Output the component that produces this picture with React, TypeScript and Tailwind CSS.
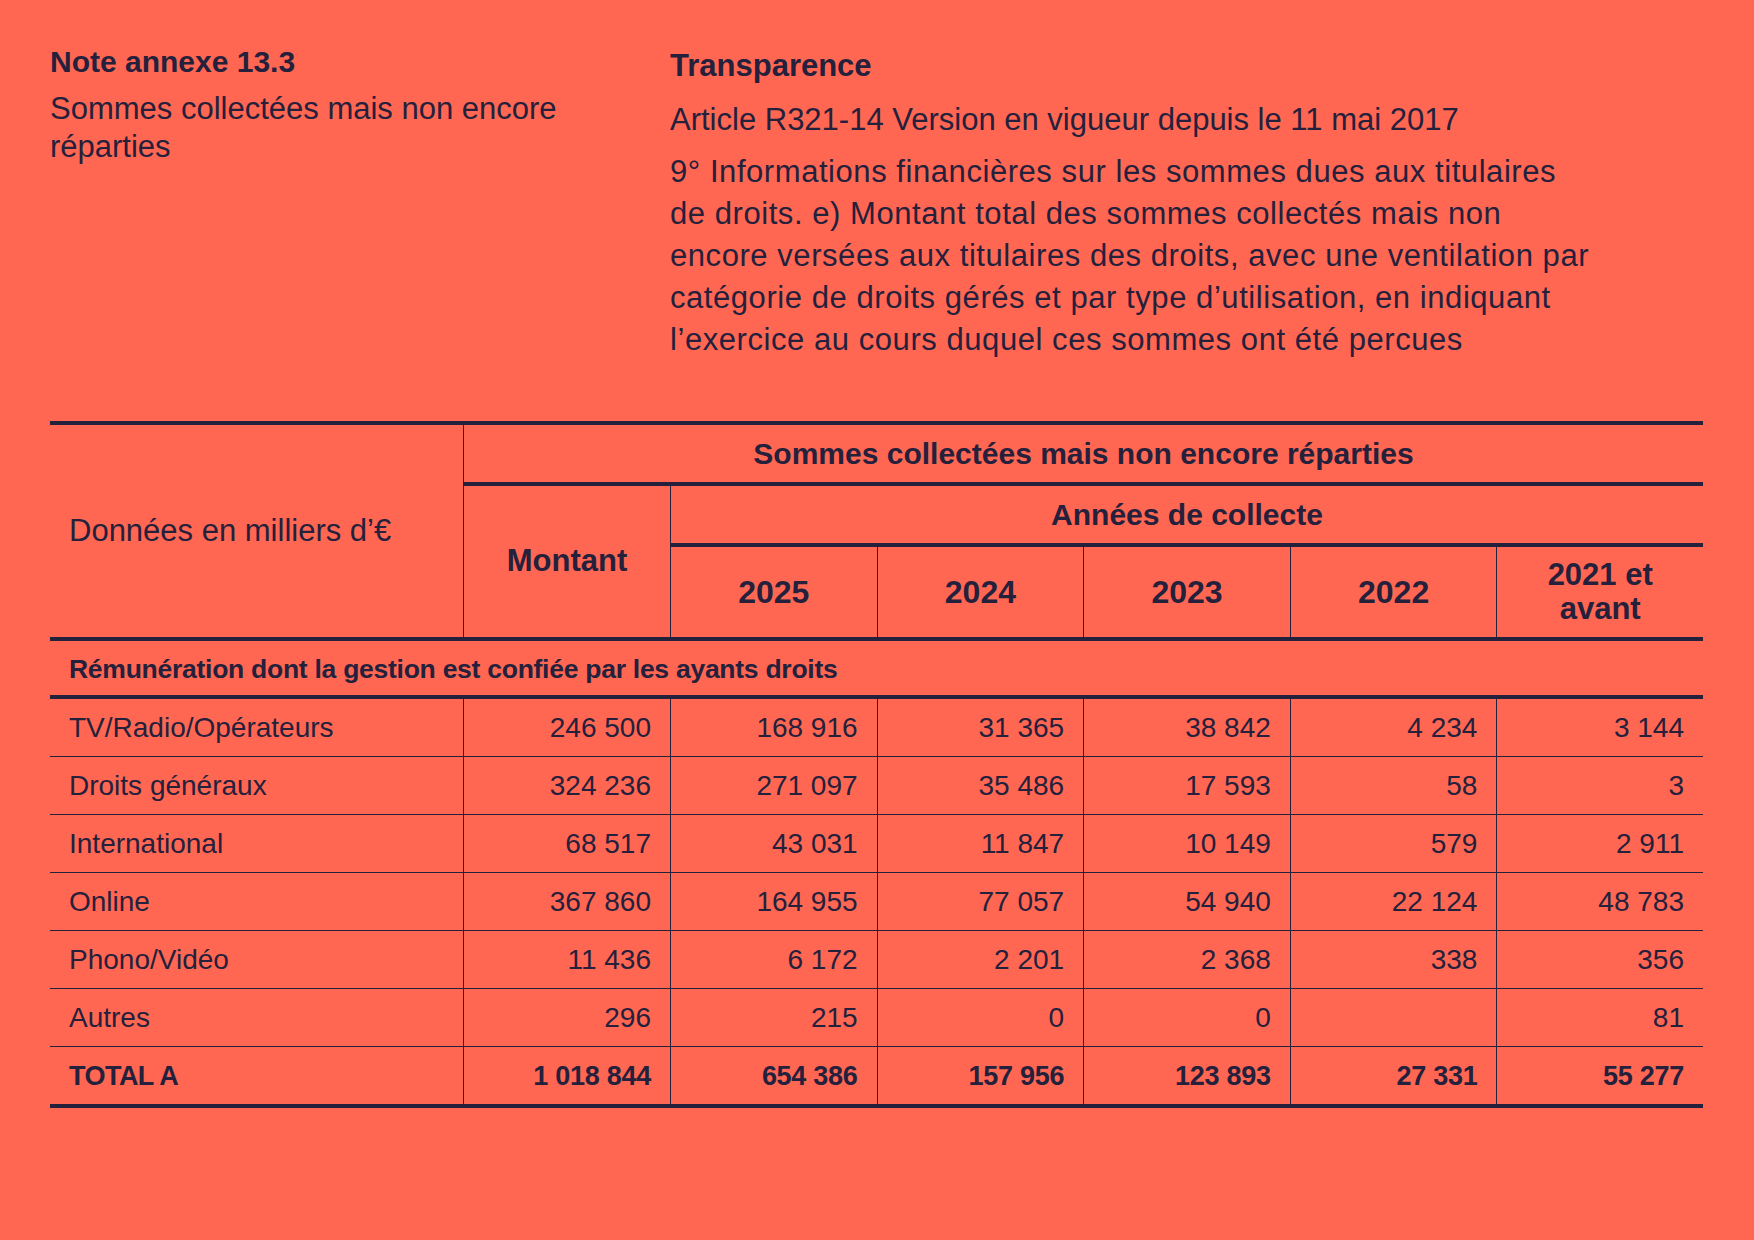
import React from "react";

const rows: { label: string; vals: string[] }[] = [
  { label: "TV/Radio/Opérateurs", vals: ["246 500", "168 916", "31 365", "38 842", "4 234", "3 144"] },
  { label: "Droits généraux", vals: ["324 236", "271 097", "35 486", "17 593", "58", "3"] },
  { label: "International", vals: ["68 517", "43 031", "11 847", "10 149", "579", "2 911"] },
  { label: "Online", vals: ["367 860", "164 955", "77 057", "54 940", "22 124", "48 783"] },
  { label: "Phono/Vidéo", vals: ["11 436", "6 172", "2 201", "2 368", "338", "356"] },
  { label: "Autres", vals: ["296", "215", "0", "0", "", "81"] },
];

const total = ["1 018 844", "654 386", "157 956", "123 893", "27 331", "55 277"];

const gridCols = "grid grid-cols-[413px_207px_repeat(5,minmax(0,1fr))]";

export default function App() {
  return (
    <div
      className="w-[1754px] h-[1240px] bg-[#ff6752] text-[#25203c] pl-[50px] pr-[51px]"
      style={{ fontFamily: '"Liberation Sans", Arial, sans-serif' }}
    >
      {/* Top section */}
      <div className="flex h-[421px]">
        <div className="w-[620px] pt-[44px]">
          <div className="text-[30px] leading-[36px] font-bold">Note annexe 13.3</div>
          <div className="mt-[10px] text-[31px] leading-[38px] whitespace-nowrap">
            <div>Sommes collectées mais non encore</div>
            <div>réparties</div>
          </div>
        </div>
        <div className="pt-[48px] whitespace-nowrap">
          <div className="text-[31px] leading-[36px] font-bold">Transparence</div>
          <div className="mt-[15px] text-[31px] leading-[42px]">
            Article R321-14 Version en vigueur depuis le 11 mai 2017
          </div>
          <div className="mt-[10px] text-[31px] leading-[42px] tracking-[0.018em]">
            <div>9° Informations financières sur les sommes dues aux titulaires</div>
            <div>de droits. e) Montant total des sommes collectés mais non</div>
            <div>encore versées aux titulaires des droits, avec une ventilation par</div>
            <div>catégorie de droits gérés et par type d’utilisation, en indiquant</div>
            <div>l’exercice au cours duquel ces sommes ont été percues</div>
          </div>
        </div>
      </div>

      {/* Table */}
      <div className="border-t-4 border-b-4 border-[#25203c]">
        {/* Header */}
        <div className={`${gridCols} grid-rows-[61px_61px_90px] border-b-4 border-[#25203c]`}>
          <div className="row-span-3 flex items-center pl-[19px] text-[31px]">
            Données en milliers d’€
          </div>
          <div className="col-span-6 border-l border-b-4 border-[#25203c] flex items-center justify-center text-[30px] font-bold">
            Sommes collectées mais non encore réparties
          </div>
          <div className="row-span-2 border-l border-[#25203c] flex items-center justify-center text-[31px] font-bold">
            Montant
          </div>
          <div className="col-span-5 border-l border-b-4 border-[#25203c] flex items-center justify-center text-[30px] font-bold">
            Années de collecte
          </div>
          {["2025", "2024", "2023", "2022"].map((y) => (
            <div
              key={y}
              className="border-l border-[#25203c] flex items-center justify-center text-[32px] font-bold"
            >
              {y}
            </div>
          ))}
          <div className="border-l border-[#25203c] flex flex-col items-center justify-center text-[31px] leading-[34px] font-bold text-center">
            <span>2021 et</span>
            <span>avant</span>
          </div>
        </div>

        {/* Section row */}
        <div className="h-[58px] border-b-4 border-[#25203c] flex items-center pl-[19px] pt-[4px] text-[26.5px] font-bold tracking-[-0.01em]">
          Rémunération dont la gestion est confiée par les ayants droits
        </div>

        {/* Data rows */}
        {rows.map((r) => (
          <div key={r.label} className={`${gridCols} h-[58px] border-b border-[#25203c]`}>
            <div className="flex items-center pl-[19px] text-[28px]">{r.label}</div>
            {r.vals.map((v, i) => (
              <div
                key={i}
                className="border-l border-[#25203c] flex items-center justify-end pr-[19px] text-[28px]"
              >
                {v}
              </div>
            ))}
          </div>
        ))}

        {/* Total row */}
        <div className={`${gridCols} h-[57px]`}>
          <div className="flex items-center pl-[19px] pt-[2px] text-[27px] font-bold tracking-[-0.02em]">
            TOTAL A
          </div>
          {total.map((v, i) => (
            <div
              key={i}
              className="border-l border-[#25203c] flex items-center justify-end pr-[19px] pt-[2px] text-[27px] font-bold tracking-[-0.01em]"
            >
              {v}
            </div>
          ))}
        </div>
      </div>
    </div>
  );
}
